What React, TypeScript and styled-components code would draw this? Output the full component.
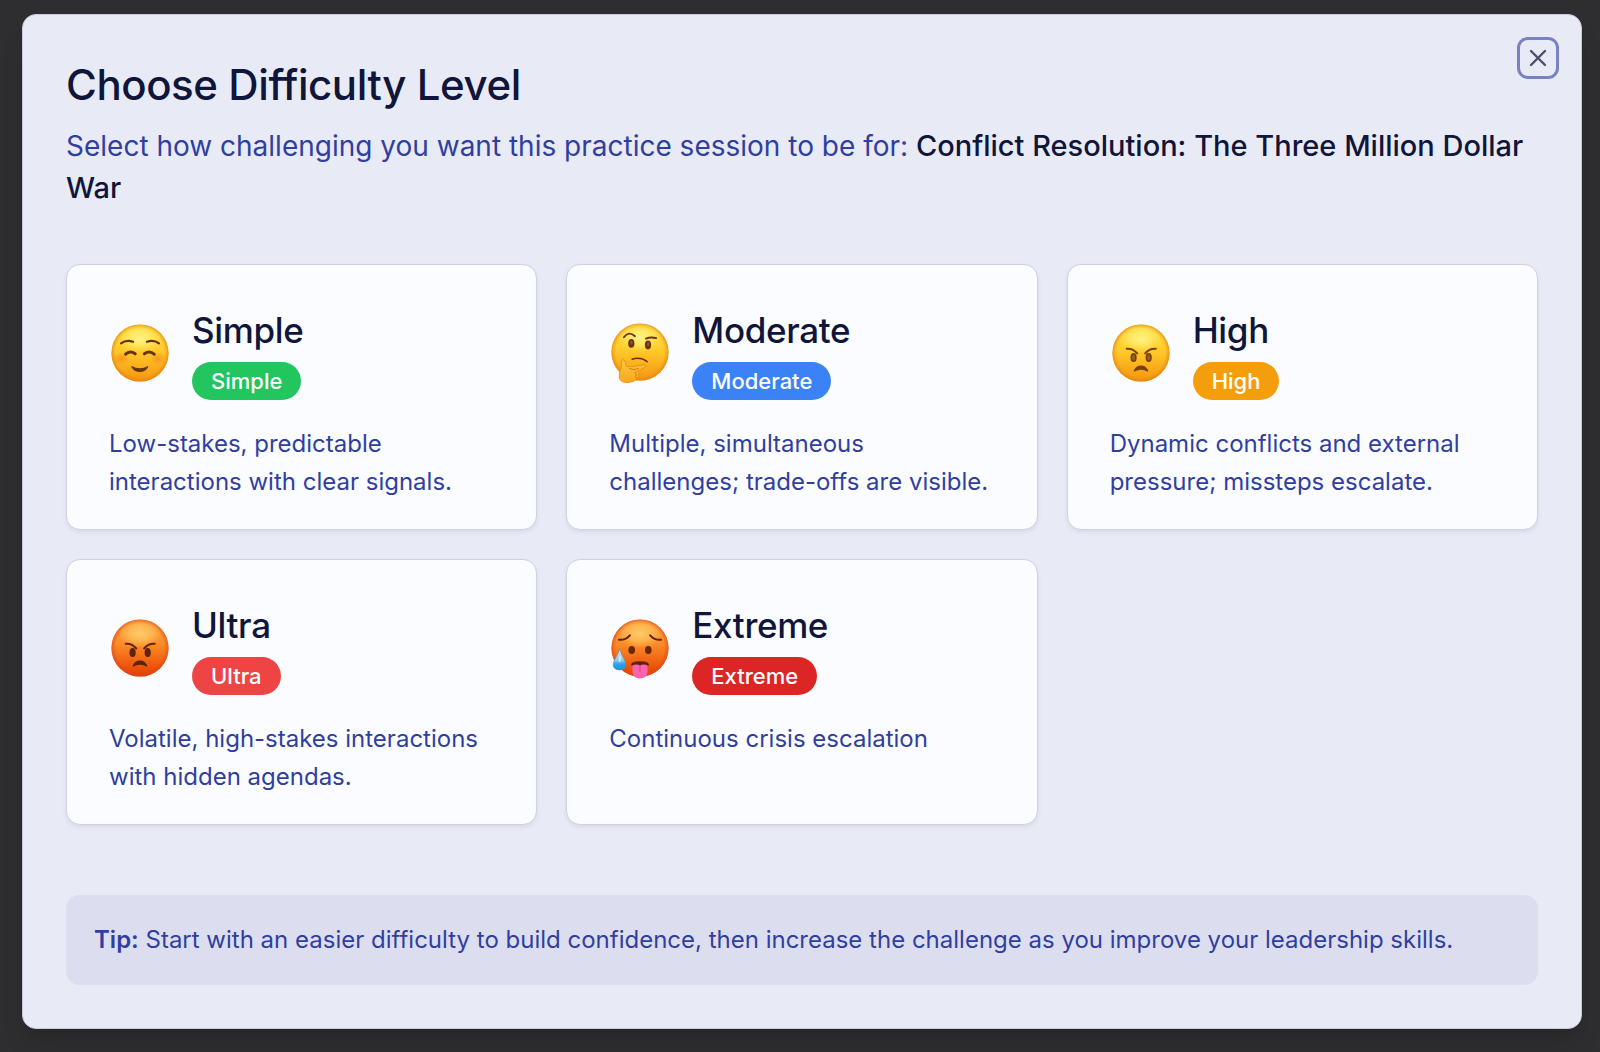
import React, { useState } from "react";
import styled, { createGlobalStyle } from "styled-components";

const GlobalStyle = createGlobalStyle`
  *, *::before, *::after { box-sizing: border-box; }
  body {
    margin: 0;
    background: #2e2e30;
    font-family: Inter, "Liberation Sans", sans-serif;
    -webkit-font-smoothing: antialiased;
  }
`;

const Overlay = styled.div`
  min-height: 100vh;
  padding: 14px 18px 21px 22px;
  background: #2e2e30;
`;

const Dialog = styled.section`
  position: relative;
  padding: 43px;
  border: 1px solid #c9cbdc;
  border-radius: 14px;
  background: #e8eaf6;
  box-shadow: 0 18px 27px -5px rgba(0, 0, 0, 0.12), 0 7px 11px -7px rgba(0, 0, 0, 0.12);
`;

const CloseButton = styled.button`
  position: absolute;
  top: 25px;
  right: 25px;
  display: grid;
  place-items: center;
  width: 36px;
  height: 36px;
  padding: 0;
  border: 0;
  border-radius: 8px;
  background: #e8eaf6;
  color: #4d4f6b;
  box-shadow: 0 0 0 3px #7783c0;
  cursor: pointer;
`;

const Header = styled.header`
  display: flex;
  flex-direction: column;
  gap: 14px;
`;

const Title = styled.h2`
  margin: 0;
  font-size: 42px;
  font-weight: 500;
  line-height: 53px;
  letter-spacing: -0.01em;
  color: #10153a;
`;

const Subtitle = styled.p`
  margin: 0;
  font-size: 28px;
  line-height: 41px;
  color: #303f9f;

  strong {
    font-size: 29px;
    font-weight: 500;
    color: #10153a;
  }
`;

const Levels = styled.div`
  display: grid;
  grid-template-columns: repeat(3, minmax(0, 1fr));
  gap: 29px;
  margin: 55px 0 70px;
`;

const Card = styled.button`
  display: flex;
  flex-direction: column;
  gap: 25px;
  padding: 40px 42px 28px;
  border: 1px solid #cfd1e2;
  border-radius: 14px;
  background: #fbfcff;
  box-shadow: 0 2px 4px rgba(30, 35, 90, 0.08);
  font-family: inherit;
  text-align: left;
  cursor: pointer;
`;

const CardHead = styled.span`
  display: flex;
  align-items: center;
  gap: 21px;
`;

const CardLabels = styled.span`
  display: flex;
  flex-direction: column;
  align-items: flex-start;
  gap: 7px;
`;

const CardTitle = styled.span`
  font-size: 35px;
  font-weight: 500;
  line-height: 50px;
  letter-spacing: -0.01em;
  color: #10153a;
`;

const Badge = styled.span<{ $color: string }>`
  padding: 0 19px;
  border-radius: 20px;
  background: ${(p) => p.$color};
  font-size: 22px;
  font-weight: 500;
  line-height: 38px;
  color: #fff;
`;

const CardText = styled.span`
  font-size: 24px;
  line-height: 38px;
  color: #303f9f;
`;

const Tip = styled.p`
  margin: 0;
  padding: 28px;
  border-radius: 14px;
  background: #dcdef0;
  font-size: 24px;
  line-height: 34px;
  color: #303f9f;

  strong {
    font-weight: 600;
  }
`;

const Face = styled.svg`
  flex: none;
  width: 62px;
  height: 62px;
  overflow: visible;
`;

const INK = "#6b3410";

function Gradients({ id, hot }: { id: string; hot?: boolean }) {
  return (
    <defs>
      <linearGradient id={`${id}-base`} x1="0" y1="0" x2="0" y2="1">
        <stop offset="0" stopColor={hot ? "#fbab46" : "#ffe14a"} />
        <stop offset="0.45" stopColor={hot ? "#fb8a26" : "#ffcb2b"} />
        <stop offset="1" stopColor={hot ? "#e63c02" : "#f59410"} />
      </linearGradient>
      <radialGradient id={`${id}-rim`}>
        <stop offset="0.84" stopColor={hot ? "#d93b12" : "#e88a10"} stopOpacity="0" />
        <stop offset="1" stopColor={hot ? "#dd4a1c" : "#e0780c"} stopOpacity="0.65" />
      </radialGradient>
      <radialGradient id={`${id}-shine`}>
        <stop offset="0" stopColor={hot ? "#ffd070" : "#fff690"} stopOpacity="0.9" />
        <stop offset="0.5" stopColor={hot ? "#ffcc68" : "#fff27c"} stopOpacity="0.6" />
        <stop offset="1" stopColor={hot ? "#ffc45c" : "#ffe850"} stopOpacity="0" />
      </radialGradient>
    </defs>
  );
}

function Head({ id, cy = 30 }: { id: string; cy?: number }) {
  return (
    <>
      <circle cx="30" cy={cy} r="28.6" fill={`url(#${id}-base)`} />
      <circle cx="30" cy={cy} r="28.6" fill={`url(#${id}-rim)`} />
      <ellipse cx="30" cy={cy - 14} rx="22" ry="14" fill={`url(#${id}-shine)`} />
    </>
  );
}

function SmileFace() {
  return (
    <Face viewBox="-1 -1 62 62" aria-hidden="true">
      <Gradients id="smile" />
      <radialGradient id="blush">
        <stop offset="0" stopColor="#f2601c" stopOpacity="0.4" />
        <stop offset="1" stopColor="#f2601c" stopOpacity="0" />
      </radialGradient>
      <Head id="smile" />
      <ellipse cx="11" cy="35.5" rx="8.5" ry="6.5" fill="url(#blush)" />
      <ellipse cx="48" cy="35.5" rx="8.5" ry="6.5" fill="url(#blush)" />
      <g fill="none" stroke={INK} strokeLinecap="round">
        <path d="M11 20.4Q16.5 16.2 23 18.8M37 18.8Q43.5 16.2 49 20.4" strokeWidth="2.2" />
        <path d="M15.6 31.2Q20 27 25.2 30.8M34.4 30.8Q39.6 27 44.2 31.2" strokeWidth="3" />
      </g>
      <path d="M21.6 43q8.2 4.4 16.4 0q.5.5 0 1.4q-3 4.6-8.2 4.6t-8.2-4.6q-.5-.9 0-1.4z" fill={INK} />
    </Face>
  );
}

function ThinkingFace() {
  return (
    <Face viewBox="-1 -1 62 62" aria-hidden="true">
      <Gradients id="think" />
      <linearGradient id="hand" x1="0" y1="0" x2="0" y2="1">
        <stop offset="0" stopColor="#ffc83c" />
        <stop offset="1" stopColor="#f7a81e" />
      </linearGradient>
      <Head id="think" cy={29} />
      <g fill="none" stroke={INK} strokeLinecap="round" strokeWidth="1.8">
        <path d="M13.9 14.2Q18.5 7.6 25 13.2" />
        <path d="M36 15.6Q41 13.6 46.2 15.2" />
        <path d="M22.2 36.2Q30.5 33.6 37.2 38.6" strokeWidth="1.5" />
      </g>
      <ellipse cx="21.3" cy="20.4" rx="3.1" ry="4.4" fill={INK} />
      <ellipse cx="38" cy="22" rx="3.1" ry="4.4" fill={INK} />
      <ellipse cx="21.5" cy="19.5" rx="1.2" ry="2" fill="#96561a" />
      <ellipse cx="38.2" cy="21.1" rx="1.2" ry="2" fill="#96561a" />
      <path
        d="M11.4 38.4q.8-2.6 2.8-1.4q1.3 1 2 6.2q4.6 1 8.4.2l9-1.7q2.6-.1 1.9 1.8q-.6 1.3-7.5 4.3q1.5 2 .4 4q.8 2.5-1.5 4q-2.8 3.5-8.6 3.7q-7.5.3-8.9-4.2q-.8-4.3 1.2-8.7q1.5-3.5.8-8.2z"
        fill="url(#hand)"
        stroke="#e58a14"
        strokeWidth="0.8"
      />
      <path d="M19.5 45.6q4.5 2.6 9-.2M26 48.4q-2 2.3.3 3.3q-2 2 0 3.6" fill="none" stroke="#c9700d" strokeWidth="0.9" strokeLinecap="round" />
    </Face>
  );
}

function AngryFace({ id, hot }: { id: string; hot?: boolean }) {
  const ink = hot ? "#5e2408" : "#7a400c";
  return (
    <Face viewBox="-1 -1 62 62" aria-hidden="true">
      <Gradients id={id} hot={hot} />
      <Head id={id} />
      <path
        d="M15.8 25.7Q22 25.2 26.2 30.4M44.8 25.7Q38.5 25.2 34.2 30.4"
        fill="none"
        stroke={ink}
        strokeWidth="2"
        strokeLinecap="round"
      />
      <ellipse cx="22.6" cy="34.5" rx="3.1" ry="4.5" fill={ink} />
      <ellipse cx="37.7" cy="34.5" rx="3.1" ry="4.5" fill={ink} />
      {!hot && (
        <>
          <ellipse cx="22.6" cy="34.5" rx="1.5" ry="2.7" fill="#99601c" />
          <ellipse cx="37.7" cy="34.5" rx="1.5" ry="2.7" fill="#99601c" />
        </>
      )}
      <path d="M22.7 47.6q2.3-5.2 7.3-5.2t7.3 5.2q.1 1.2-1 .8q-2.8-1.7-6.3-1.7t-6.3 1.7q-1.1.4-1-.8z" fill={ink} />
    </Face>
  );
}

function HotFace() {
  return (
    <Face viewBox="-1 -1 62 62" aria-hidden="true">
      <Gradients id="heat" hot />
      <linearGradient id="drop" x1="0" y1="0" x2="0" y2="1">
        <stop offset="0" stopColor="#d8e8f2" />
        <stop offset="0.55" stopColor="#8cc6ea" />
        <stop offset="0.7" stopColor="#2ba5ef" />
        <stop offset="1" stopColor="#1b8fe0" />
      </linearGradient>
      <Head id="heat" />
      <path
        d="M9 21.8Q15.5 22.3 19.9 17.3M51 21.8Q44.5 22.3 40.1 17.3"
        fill="none"
        stroke="#5e2408"
        strokeWidth="2"
        strokeLinecap="round"
      />
      <ellipse cx="21.7" cy="32" rx="3.3" ry="4" fill="#6b2606" />
      <ellipse cx="38.3" cy="32" rx="3.3" ry="4" fill="#6b2606" />
      <path d="M21 46.8q0-3.6 9-3.6t9 3.6q-.2 1-1.3.9H22.3q-1.1 0-1.3-.9z" fill="#5e2408" />
      <path d="M22.5 47.4q3.8-1.6 7.5 0q3.8-1.6 7.5 0v6.4q-.4 6.5-7.5 6.6q-7.1-.1-7.5-6.6z" fill="#fb63ae" />
      <path d="M30 47.8v6" stroke="#dc4590" strokeWidth="1.2" strokeLinecap="round" />
      <path d="M9.8 31.2q1.3 5 4 9.3q4.5 8.5-1 10.9q-3.3 1.2-6.6 0q-5.2-2.4-1.7-9.7q3.7-5.5 5.3-10.5z" fill="url(#drop)" stroke="#4a8cae" strokeWidth="0.5" />
      <path d="M10.2 36.5q1.5 5-.2 8.2q-2.6-1.5.2-8.2z" fill="#f2f8fc" opacity="0.75" />
    </Face>
  );
}

const LEVELS = [
  { name: "Simple", color: "#22c55e", text: "Low-stakes, predictable interactions with clear signals.", face: <SmileFace /> },
  { name: "Moderate", color: "#3b82f6", text: "Multiple, simultaneous challenges; trade-offs are visible.", face: <ThinkingFace /> },
  { name: "High", color: "#f59e0b", text: "Dynamic conflicts and external pressure; missteps escalate.", face: <AngryFace id="high" /> },
  { name: "Ultra", color: "#ef4444", text: "Volatile, high-stakes interactions with hidden agendas.", face: <AngryFace id="ultra" hot /> },
  { name: "Extreme", color: "#dc2626", text: "Continuous crisis escalation", face: <HotFace /> },
];

export default function App() {
  const [selected, setSelected] = useState<string | null>(null);
  return (
    <>
      <GlobalStyle />
      <Overlay>
        <Dialog role="dialog" aria-labelledby="difficulty-title">
          <Header>
            <Title id="difficulty-title">Choose Difficulty Level</Title>
            <Subtitle>
              Select how challenging you want this practice session to be for:{" "}
              <strong>Conflict Resolution: The Three Million Dollar War</strong>
            </Subtitle>
          </Header>
          <Levels>
            {LEVELS.map((level) => (
              <Card
                key={level.name}
                type="button"
                aria-pressed={selected === level.name}
                onClick={() => setSelected(level.name)}
              >
                <CardHead>
                  {level.face}
                  <CardLabels>
                    <CardTitle>{level.name}</CardTitle>
                    <Badge $color={level.color}>{level.name}</Badge>
                  </CardLabels>
                </CardHead>
                <CardText>{level.text}</CardText>
              </Card>
            ))}
          </Levels>
          <Tip>
            <strong>Tip:</strong> Start with an easier difficulty to build confidence, then increase the
            challenge as you improve your leadership skills.
          </Tip>
          <CloseButton type="button" aria-label="Close">
            <svg width="18" height="18" viewBox="0 0 18 18" fill="none" stroke="currentColor" strokeWidth="2.4" strokeLinecap="round" aria-hidden="true">
              <path d="M2 2l14 14M16 2l-14 14" />
            </svg>
          </CloseButton>
        </Dialog>
      </Overlay>
    </>
  );
}
